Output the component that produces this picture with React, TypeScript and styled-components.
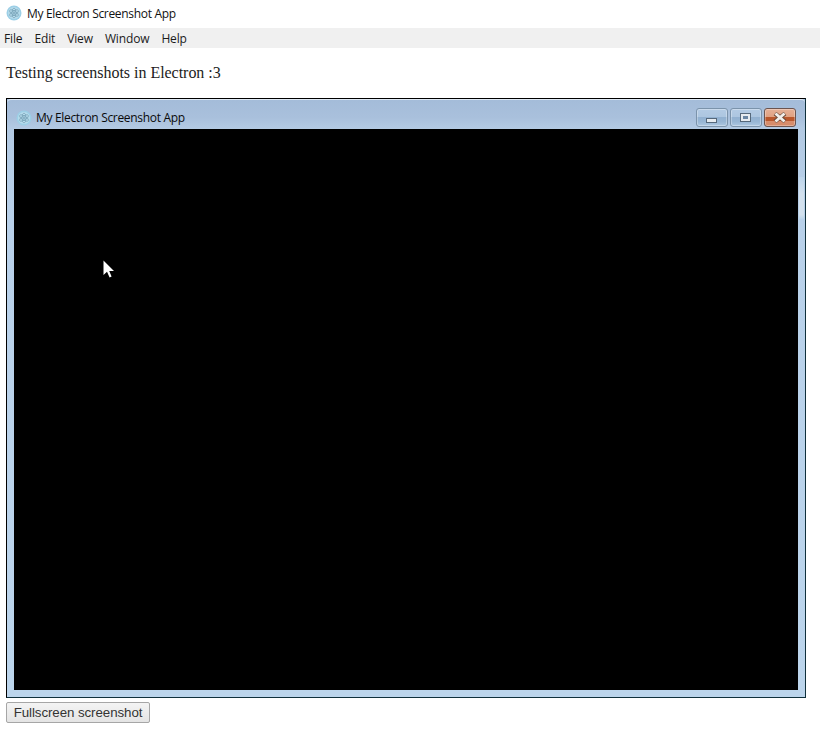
import React from "react";
import styled, { createGlobalStyle } from "styled-components";

const Global = createGlobalStyle`
  html, body { margin: 0; padding: 0; background: #fff; }
  #root { width: 820px; height: 731px; overflow: hidden; }
`;

const Page = styled.div`
  display: flex;
  flex-direction: column;
  width: 820px;
  height: 731px;
`;

const TitleBar = styled.header`
  display: flex;
  align-items: center;
  gap: 5px;
  height: 28px;
  padding: 0 0 2px 6px;
  box-sizing: border-box;
  font: 12px "Open Sans", "Noto Sans", sans-serif;
  letter-spacing: -0.32px;
  color: #111;
`;

const MenuBar = styled.nav`
  display: flex;
  gap: 12px;
  height: 20px;
  padding-left: 4px;
  box-sizing: border-box;
  align-items: center;
  background: #f0f0f0;
  font: 12px "Open Sans", "Noto Sans", sans-serif;
  letter-spacing: -0.14px;
  color: #1a1a1a;
`;

const Content = styled.main`
  display: flex;
  flex-direction: column;
  padding: 16px 6px 0;
`;

const Intro = styled.p`
  margin: 0 0 16px;
  height: 18px;
  font: 16px/18px "Liberation Serif", serif;
  letter-spacing: -0.03px;
  color: #1c1c1c;
`;

const Frame = styled.section`
  position: relative;
  display: flex;
  flex-direction: column;
  width: 800px;
  height: 600px;
  box-sizing: border-box;
  border: 1px solid #000;
  border-right-color: #10303c;
  border-bottom-color: #10303c;
  background: linear-gradient(to bottom, #a6bfdd 0, #b3cae3 30px, #b9d1ea 120px, #bcd5ec 100%);
`;

const InnerTitle = styled.div`
  display: flex;
  align-items: center;
  gap: 4px;
  height: 30px;
  padding: 6px 9px 0 9px;
  box-sizing: border-box;
  border-top: 1px solid #dfe9f4;
  border-radius: 4px 4px 0 0;
  background: linear-gradient(to bottom, #a4bcd9 0, #a9c0dc 60%, #b4cbe4 100%);
  font: 12px "Open Sans", "Noto Sans", sans-serif;
  letter-spacing: -0.32px;
  color: #0a0a0a;
`;

const InnerLabel = styled.span`
  flex: 1;
`;

const Controls = styled.div`
  display: flex;
  gap: 2px;
  align-self: flex-start;
  margin-top: 2px;
`;

const ControlButton = styled.button<{ $danger?: boolean }>`
  display: flex;
  align-items: center;
  justify-content: center;
  width: 32px;
  height: 19px;
  padding: 0;
  border-radius: 3px;
  border: 1px solid ${(p) => (p.$danger ? "#6b5450" : "#7b93ab")};
  box-shadow: inset 0 0 0 1px rgba(255, 255, 255, 0.3);
  background: ${(p) =>
    p.$danger
      ? "linear-gradient(to bottom, #e6b096 0, #e0a283 45%, #b9572c 46%, #b9572c 68%, #d98f6e 69%, #d58a68 100%)"
      : "linear-gradient(to bottom, #b3cbe4 0, #adc6e0 45%, #92b1d1 46%, #98b6d4 75%, #adc7e1 100%)"};
`;

const Viewport = styled.div`
  flex: 1;
  margin: 0 7px 7px;
  background: #000;
`;

const ScrollGlow = styled.div`
  position: absolute;
  right: 1px;
  top: 78px;
  width: 5px;
  height: 42px;
  background: linear-gradient(to bottom, #bcd4ea 0, #d3e1ee 40%, #d3e1ee 90%, #bcd4ea 100%);
`;

const Cursor = styled.svg`
  position: absolute;
  left: 96px;
  top: 161px;
`;

const ActionButton = styled.button`
  width: 144px;
  height: 21px;
  margin-top: 4px;
  padding: 0;
  border: 1px solid #a6a6a6;
  border-radius: 2px;
  background: linear-gradient(to bottom, #f4f4f4, #e4e4e4);
  font: 13.33px "Liberation Sans", Arial, sans-serif;
  letter-spacing: -0.08px;
  color: #333;
`;

const AppIcon = () => (
  <svg width="16" height="16" viewBox="0 0 16 16" aria-hidden="true">
    <circle cx="8" cy="8" r="7.5" fill="#9ccfe6" />
    <circle cx="8" cy="8" r="6" fill="#b7dcec" />
    <g fill="none" stroke="#7ba6bb" strokeWidth="0.8">
      <ellipse cx="8" cy="8" rx="5" ry="2" transform="rotate(30 8 8)" />
      <ellipse cx="8" cy="8" rx="5" ry="2" transform="rotate(90 8 8)" />
      <ellipse cx="8" cy="8" rx="5" ry="2" transform="rotate(150 8 8)" />
    </g>
    <circle cx="8" cy="8" r="1" fill="#7ba6bb" />
  </svg>
);

const MinIcon = () => (
  <svg width="12" height="6" viewBox="0 0 12 6" style={{ marginTop: 6 }} aria-hidden="true">
    <rect x="0.5" y="0.5" width="10" height="4" fill="#e6ebf0" stroke="#55687b" />
  </svg>
);

const MaxIcon = () => (
  <svg width="12" height="10" viewBox="0 0 12 10" aria-hidden="true">
    <rect x="0.5" y="0.5" width="10" height="8" fill="#e6ebf0" stroke="#55687b" />
    <rect x="3" y="3" width="5" height="3" fill="#6a86a4" />
  </svg>
);

const CloseIcon = () => (
  <svg width="16" height="11" viewBox="0 0 16 11" aria-hidden="true">
    <path d="M3 1.5 L13 9.5 M13 1.5 L3 9.5" stroke="#6b4a3a" strokeWidth="4.2" />
    <path d="M3.5 1.5 L12.5 9.5 M12.5 1.5 L3.5 9.5" stroke="#f1eeea" strokeWidth="2.8" />
  </svg>
);

export default function App() {
  return (
    <Page>
      <Global />
      <TitleBar>
        <AppIcon />
        <span>My Electron Screenshot App</span>
      </TitleBar>
      <MenuBar>
        <span>File</span>
        <span>Edit</span>
        <span>View</span>
        <span>Window</span>
        <span>Help</span>
      </MenuBar>
      <Content>
        <Intro>Testing screenshots in Electron :3</Intro>
        <Frame>
          <InnerTitle>
            <AppIcon />
            <InnerLabel>My Electron Screenshot App</InnerLabel>
            <Controls>
              <ControlButton aria-label="Minimize"><MinIcon /></ControlButton>
              <ControlButton aria-label="Maximize"><MaxIcon /></ControlButton>
              <ControlButton $danger aria-label="Close"><CloseIcon /></ControlButton>
            </Controls>
          </InnerTitle>
          <Viewport />
          <ScrollGlow />
          <Cursor width="12" height="19" viewBox="0 0 12 19" aria-hidden="true">
            <path d="M0.5 0.5 V15 L4 11.8 L6.6 17.5 L8.6 16.6 L6.2 11 H11 Z" fill="#fff" />
          </Cursor>
        </Frame>
        <ActionButton>Fullscreen screenshot</ActionButton>
      </Content>
    </Page>
  );
}
